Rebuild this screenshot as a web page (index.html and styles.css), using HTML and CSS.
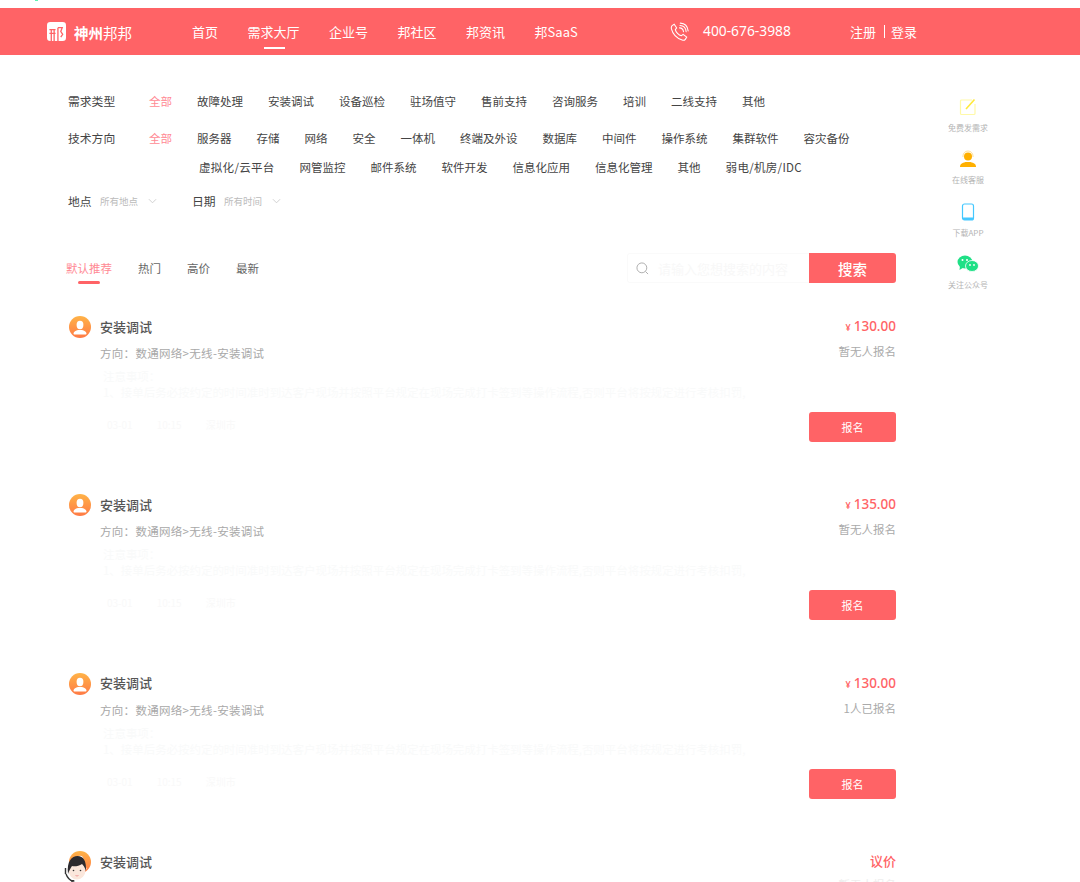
FILE: index.html
```html
<!DOCTYPE html>
<html lang="zh-CN">
<head>
<meta charset="utf-8">
<title>需求大厅</title>
<link rel="stylesheet" href="styles.css">
</head>
<body>
<span class="top-mark"></span>
<header class="header">
  <a class="logo">
    <svg class="logo-icon" viewBox="0 0 20 20"><rect width="20" height="20" rx="3.500" fill="#fff"/><path d="M2.500 8h6.500M2.500 12h6.500M4.500 8v12M7.500 8v12M11.500 6h4.500l-1.500 4 2 3-2 3M11.500 6v14" fill="none" stroke="#ff6366" stroke-width="1.400"/></svg>
    <span class="logo-text"><b>神州</b>邦邦</span>
  </a>
  <nav class="nav">
    <a>首页</a>
    <a class="active">需求大厅</a>
    <a>企业号</a>
    <a>邦社区</a>
    <a>邦资讯</a>
    <a>邦SaaS</a>
  </nav>
  <svg class="phone-icon" viewBox="0 0 20 20" fill="none" stroke="#fff" stroke-width="1.100" stroke-linecap="round"><path d="M2.200 3.800 4.400 2.400 7 6.200 5.600 8c.5 2.600 3.500 5.800 6.400 6.500l1.800-1.500 3.800 2.900-1.500 2.400c-.7 1-2 1.200-3.300.7C7.200 17.100 2.800 12.200 1.500 7.200c-.3-1.300 0-2.600.7-3.400Z"/><path d="M10 6.200c2.500.1 4 1.700 4.200 4.100M10.500 3.700c3.700.2 6.200 2.800 6.500 6.500M10.800 1.200c4.700.3 7.800 3.500 8.300 8.200"/></svg>
  <span class="tel">400-676-3988</span>
  <div class="auth"><a>注册</a><i></i><a>登录</a></div>
</header>

<main class="page">
  <div class="content">
    <section class="filters">
      <div class="filter-row type-row">
        <span class="filter-label">需求类型</span>
        <div class="options">
          <a class="on">全部</a><a>故障处理</a><a>安装调试</a><a>设备巡检</a><a>驻场值守</a><a>售前支持</a><a>咨询服务</a><a>培训</a><a>二线支持</a><a>其他</a>
        </div>
      </div>
      <div class="filter-row tech-row">
        <span class="filter-label">技术方向</span>
        <div class="options">
          <a class="on">全部</a><a>服务器</a><a>存储</a><a>网络</a><a>安全</a><a>一体机</a><a>终端及外设</a><a>数据库</a><a>中间件</a><a>操作系统</a><a>集群软件</a><a>容灾备份</a>
        </div>
      </div>
      <div class="options extra">
        <a class="wide">虚拟化/云平台</a><a>网管监控</a><a>邮件系统</a><a>软件开发</a><a>信息化应用</a><a>信息化管理</a><a>其他</a><a class="wide">弱电/机房/IDC</a>
      </div>
      <div class="selects">
        <span class="select"><b>地点</b><em>所有地点</em><svg class="chev" viewBox="0 0 10 6"><path d="M1 1l4 4 4-4" fill="none" stroke="#ccc"/></svg></span>
        <span class="select"><b>日期</b><em>所有时间</em><svg class="chev" viewBox="0 0 10 6"><path d="M1 1l4 4 4-4" fill="none" stroke="#ccc"/></svg></span>
      </div>
    </section>

    <section class="toolbar">
      <div class="tabs">
        <a class="on">默认推荐</a><a>热门</a><a>高价</a><a>最新</a>
      </div>
      <div class="search">
        <div class="search-box">
          <svg class="search-icon" viewBox="0 0 14 14" fill="none" stroke="#aaa" stroke-width="1"><circle cx="6.300" cy="6.300" r="5.300"/><path d="M10.200 10.200 13 13"/></svg>
          <span class="placeholder">请输入您想搜索的内容</span>
        </div>
        <button class="search-btn">搜索</button>
      </div>
    </section>

    <section class="list">
      <article class="card">
        <div class="card-main">
          <div class="card-title"><svg class="avatar" viewBox="0 0 22 22"><use href="#person"/></svg><h3>安装调试</h3></div>
          <p class="dir">方向&#65306;数通网络&gt;无线-安装调试</p>
          <p class="note">注意事项&#65306;<br>1、接单后务必按约定的时间准时到达客户现场并按照平台规定在现场完成打卡签到等操作流程,否则平台将按规定进行考核扣罚,</p>
          <p class="meta"><span>03-01</span><span>10:15</span><span>深圳市</span></p>
        </div>
        <div class="card-side">
          <div class="price"><small>¥</small>130.00</div>
          <div class="enroll">暂无人报名</div>
          <button class="apply">报名</button>
        </div>
      </article>
      <article class="card">
        <div class="card-main">
          <div class="card-title"><svg class="avatar" viewBox="0 0 22 22"><use href="#person"/></svg><h3>安装调试</h3></div>
          <p class="dir">方向&#65306;数通网络&gt;无线-安装调试</p>
          <p class="note">注意事项&#65306;<br>1、接单后务必按约定的时间准时到达客户现场并按照平台规定在现场完成打卡签到等操作流程,否则平台将按规定进行考核扣罚,</p>
          <p class="meta"><span>03-01</span><span>10:15</span><span>深圳市</span></p>
        </div>
        <div class="card-side">
          <div class="price"><small>¥</small>135.00</div>
          <div class="enroll">暂无人报名</div>
          <button class="apply">报名</button>
        </div>
      </article>
      <article class="card">
        <div class="card-main">
          <div class="card-title"><svg class="avatar" viewBox="0 0 22 22"><use href="#person"/></svg><h3>安装调试</h3></div>
          <p class="dir">方向&#65306;数通网络&gt;无线-安装调试</p>
          <p class="note">注意事项&#65306;<br>1、接单后务必按约定的时间准时到达客户现场并按照平台规定在现场完成打卡签到等操作流程,否则平台将按规定进行考核扣罚,</p>
          <p class="meta"><span>03-01</span><span>10:15</span><span>深圳市</span></p>
        </div>
        <div class="card-side">
          <div class="price"><small>¥</small>130.00</div>
          <div class="enroll">1人已报名</div>
          <button class="apply">报名</button>
        </div>
      </article>
      <article class="card">
        <div class="card-main">
          <div class="card-title"><svg class="avatar" viewBox="0 0 22 22"><use href="#person"/></svg><h3>安装调试</h3></div>
          <p class="dir">方向&#65306;数通网络&gt;无线-安装调试</p>
        </div>
        <div class="card-side">
          <div class="price talk">议价</div>
          <div class="enroll faint">暂无人报名</div>
        </div>
      </article>
    </section>
  </div>

  <aside class="side">
    <a class="side-item">
      <svg viewBox="0 0 18 18" fill="none"><path d="M13 2H2.500A1 1 0 0 0 1.500 3v12.500a1 1 0 0 0 1 1H15a1 1 0 0 0 1-1V6" stroke="#fff9a8" stroke-width="1.200"/><path d="M7 11 15.500 1.500" stroke="#ffe93a" stroke-width="1.600"/></svg>
      <span>免费发需求</span>
    </a>
    <a class="side-item">
      <svg viewBox="0 0 18 18"><circle cx="9" cy="6.500" r="4" fill="#ffb000"/><path d="M4 7V6a5 5 0 0 1 10 0v1" fill="none" stroke="#ffd77a" stroke-width=".8"/><path d="M1 17c0-3 2-4 5.500-5h5c3.500 1 5.500 2 5.500 5Z" fill="#ffb000"/></svg>
      <span>在线客服</span>
    </a>
    <a class="side-item">
      <svg viewBox="0 0 18 18"><rect x="3.500" y="1" width="11" height="16" rx="2" fill="#fff" stroke="#45c8ff" stroke-width="1.200"/><path d="M3.500 14.500h11v.5a2 2 0 0 1-2 2h-7a2 2 0 0 1-2-2Z" fill="#45c8ff"/></svg>
      <span>下载APP</span>
    </a>
    <a class="side-item">
      <svg class="wechat" viewBox="0 0 22 18"><ellipse cx="8" cy="7" rx="7.500" ry="6.500" fill="#1fe086"/><path d="M3 11 2.500 15l4-2.500Z" fill="#1fe086"/><ellipse cx="15" cy="11" rx="6.500" ry="5.500" fill="#1fe086" stroke="#fff" stroke-width=".8"/><circle cx="5.500" cy="5" r="1" fill="#fff"/><circle cx="10" cy="5" r="1" fill="#fff"/><circle cx="13" cy="10" r=".9" fill="#fff"/><circle cx="17" cy="10" r=".9" fill="#fff"/></svg>
      <span>关注公众号</span>
    </a>
  </aside>
</main>

<svg class="agent" viewBox="0 0 28 30">
  <ellipse cx="14" cy="16" rx="8.500" ry="9.500" fill="#fbe7dc"/>
  <path d="M5 20C3.500 7 9 2 14.500 2c6 0 9 5 8.500 15-1-3.500-2.500-5.500-4-7-3 2.500-8.500 2.500-10 2-1.500 2-3 5-4 8Z" fill="#2c2a2e"/>
  <path d="M2.500 14v6M3 20c1.500 4 4 6.500 7 7" fill="none" stroke="#333" stroke-width="1.400"/>
  <rect x="8" y="26" width="3.500" height="1.800" rx=".9" fill="#333"/>
  <circle cx="10.500" cy="16.500" r=".8" fill="#333"/><circle cx="17.500" cy="16.500" r=".8" fill="#333"/>
  <path d="M12.500 21.500q1.500 1 3 0" fill="none" stroke="#e88" stroke-width=".8"/>
</svg>

<svg class="defs" aria-hidden="true">
  <defs>
    <linearGradient id="avatarFill" x1="0" y1="0" x2="0" y2="1"><stop offset="0" stop-color="#ffb347"/><stop offset="1" stop-color="#ff7a45"/></linearGradient>
    <symbol id="person" viewBox="0 0 22 22">
      <circle cx="11" cy="11" r="11" fill="url(#avatarFill)"/>
      <ellipse cx="11" cy="9" rx="3.400" ry="4.200" fill="#fff"/>
      <path d="M4.500 17.500c0-2 2.500-3 4.500-3.500h4c2 .5 4.500 1.500 4.500 3.500 0 .8-.5 1-1 1h-11c-.5 0-1-.2-1-1Z" fill="#fff"/>
    </symbol>
  </defs>
</svg>
</body>
</html>
```

FILE: styles.css
```css
* { box-sizing: border-box; }
html, body { margin: 0; height: 882px; overflow: hidden; background: #fff; }
body {
  position: relative;
  padding-top: 8px;
  font-family: "Noto Sans CJK SC", "Noto Sans", sans-serif;
  color: #555;
}
a { color: inherit; text-decoration: none; }
p, h3 { margin: 0; }
em { font-style: normal; }

.top-mark { position: absolute; left: 35px; top: 0; width: 3px; height: 1px; background: #5ff0b0; }

.header {
  display: flex;
  align-items: center;
  height: 47px;
  padding-left: 47px;
  background: #ff6366;
  color: #fff;
}
.logo { display: flex; align-items: center; gap: 8px; width: 145px; }
.logo-icon { width: 19px; height: 19px; }
.logo-text { font-size: 14.500px; line-height: 20px; white-space: nowrap; position: relative; top: 1px; }
.logo-text b { font-weight: 700; }
.nav { display: flex; gap: 29.500px; width: 478px; font-size: 13px; }
.nav a { position: relative; line-height: 47px; white-space: nowrap; }
.nav a.active::after {
  content: "";
  position: absolute;
  left: 16px;
  bottom: 6px;
  width: 21px;
  height: 2px;
  background: #fff;
}
.phone-icon { width: 19px; height: 19px; }
.tel { margin-left: 14px; width: 147px; font-family: "Noto Sans", sans-serif; font-size: 13.800px; position: relative; top: -1px; }
.auth { display: flex; align-items: center; font-size: 13px; }
.auth i { width: 1px; height: 13px; margin: 0 6px 0 8px; background: #fff; }

.page { display: flex; padding-left: 66px; }
.content { width: 830px; flex: none; }

.filters { padding: 36px 0 0 2px; font-size: 11.500px; line-height: 20px; color: #444; }
.filter-row { display: flex; }
.filter-label { width: 81px; flex: none; font-size: 11.800px; }
.options { display: flex; gap: 25px; white-space: nowrap; }
.tech-row { margin-top: 17px; }
.options .on { color: #ff8a94; }
.wide { letter-spacing: .3px; }
.extra { margin: 9px 0 0 131px; }
.selects { display: flex; gap: 35px; margin-top: 14px; }
.select { display: flex; align-items: center; }
.select b { font-weight: 400; font-size: 11.800px; width: 32px; }
.select em { font-size: 9.500px; color: #bbb; width: 48px; }
.chev { width: 9px; height: 6px; }

.toolbar {
  display: flex;
  justify-content: space-between;
  margin-top: 42px;
  height: 30px;
}
.tabs { display: flex; gap: 26px; font-size: 11.500px; line-height: 30px; color: #666; }
.tabs a { position: relative; }
.tabs .on { color: #ff8a94; }
.tabs .on::after {
  content: "";
  position: absolute;
  left: 12px;
  top: 28px;
  width: 22px;
  height: 3px;
  border-radius: 2px;
  background: #ff6366;
}
.search { display: flex; }
.search-box {
  display: flex;
  align-items: center;
  gap: 9px;
  width: 182px;
  padding-left: 8px;
  border: 1px solid #fafafa;
  border-right: 0;
  border-radius: 3px 0 0 3px;
  overflow: hidden;
}
.search-icon { width: 13px; height: 13px; flex: none; }
.placeholder { font-size: 13px; color: #f8f8f8; white-space: nowrap; }
.search-btn, .apply {
  border: 0;
  padding: 0;
  color: #fff;
  background: #ff6366;
  font-family: inherit;
}
.search-btn { width: 87px; border-radius: 0 3px 3px 0; font-size: 14.500px; font-weight: 500; }

.list { margin-top: 33px; }
.card { display: flex; justify-content: space-between; height: 178.400px; padding-left: 3px; }
.card-main { min-width: 0; white-space: nowrap; }
.card-title { display: flex; align-items: center; height: 22px; gap: 9px; }
.avatar { width: 22px; height: 22px; }
.card-title h3 { font-size: 13px; font-weight: 500; color: #555; position: relative; top: -1px; }
.dir { margin: 5px 0 0 31px; font-size: 11.500px; line-height: 20px; letter-spacing: .3px; color: #a8a8a8; }
.note { margin: 5px 0 0 34px; font-size: 11.500px; line-height: 16px; letter-spacing: -.05px; color: #f9fafa; }
.meta { display: flex; gap: 24px; margin: 15px 0 0 38px; font-size: 10px; line-height: 20px; color: #f9f9f9; }
.card-side { display: flex; flex-direction: column; align-items: flex-end; width: 87px; }
.price { font-family: "Noto Sans", sans-serif; font-size: 13.500px; font-weight: 500; line-height: 20px; color: #ff6366; }
.price small { font-size: 9px; margin-right: 3px; }
.price.talk { font-family: inherit; font-size: 13px; }
.enroll { margin-top: 3px; font-size: 11.500px; line-height: 20px; color: #aaa; }
.enroll.faint { color: #eee; }
.apply { width: 87px; height: 30px; margin-top: 51px; border-radius: 3px; font-size: 11px; }

.side { display: flex; flex-direction: column; width: 46px; margin: 43px 0 0 49px; flex: none; }
.side-item { display: flex; flex-direction: column; align-items: center; height: 52.300px; color: #b4b4b4; }
.side-item svg { width: 18px; height: 18px; }
.side-item svg.wechat { width: 22px; }
.side-item span { margin-top: 6px; font-size: 8px; line-height: 12px; white-space: nowrap; }

.agent { position: absolute; left: 63px; top: 854px; width: 28px; height: 30px; }
.defs { position: absolute; width: 0; height: 0; }
```
